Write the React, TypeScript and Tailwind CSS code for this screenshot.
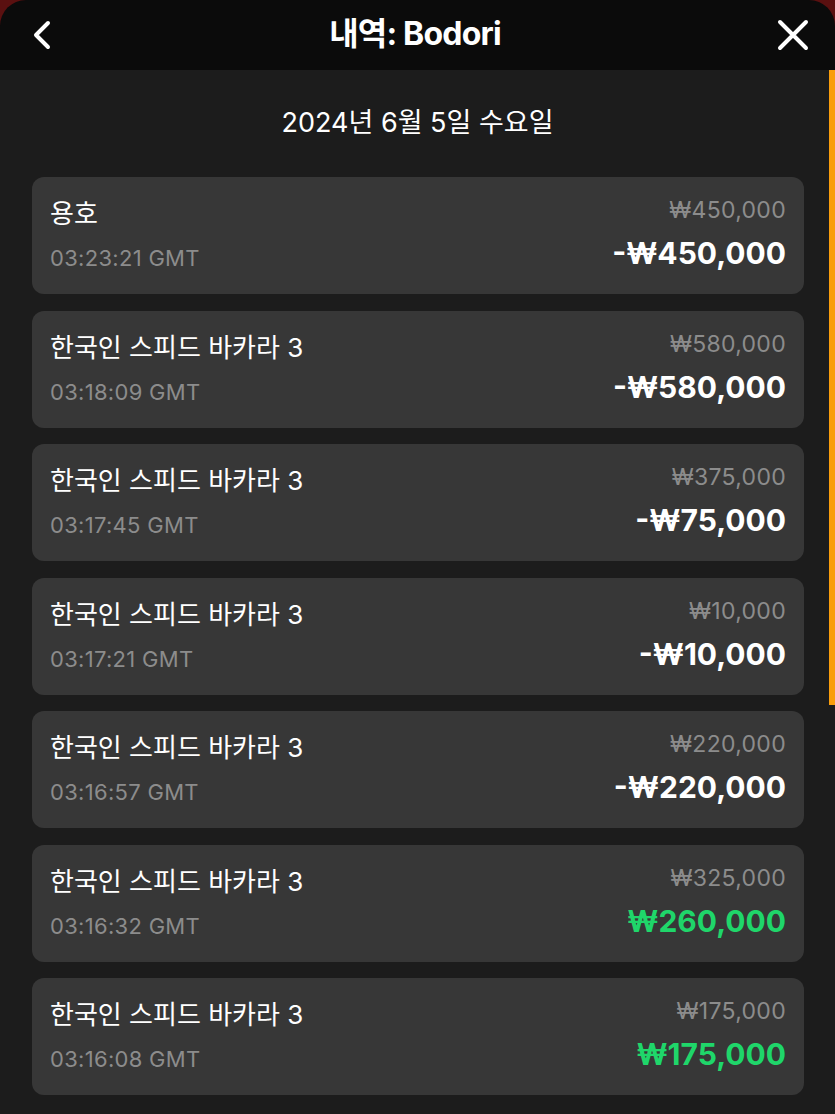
type Row = { name: string; time: string; bet: string; result: string; win?: boolean };

const rows: Row[] = [
  { name: "용호", time: "03:23:21 GMT", bet: "₩450,000", result: "-₩450,000" },
  { name: "한국인 스피드 바카라 3", time: "03:18:09 GMT", bet: "₩580,000", result: "-₩580,000" },
  { name: "한국인 스피드 바카라 3", time: "03:17:45 GMT", bet: "₩375,000", result: "-₩75,000" },
  { name: "한국인 스피드 바카라 3", time: "03:17:21 GMT", bet: "₩10,000", result: "-₩10,000" },
  { name: "한국인 스피드 바카라 3", time: "03:16:57 GMT", bet: "₩220,000", result: "-₩220,000" },
  { name: "한국인 스피드 바카라 3", time: "03:16:32 GMT", bet: "₩325,000", result: "₩260,000", win: true },
  { name: "한국인 스피드 바카라 3", time: "03:16:08 GMT", bet: "₩175,000", result: "₩175,000", win: true },
];

export default function App() {
  return (
    <div
      className="w-[835px] h-[1114px] overflow-hidden bg-[#5a1010] flex flex-col"
      style={{ fontFamily: "Inter, 'Noto Sans CJK KR', sans-serif" }}
    >
      {/* Header */}
      <header className="h-[70px] shrink-0 bg-[#0b0b0b] rounded-t-[26px] flex items-center justify-between pl-[31px] pr-[26px] text-white">
        <svg width="22" height="30" viewBox="0 0 22 30" fill="none" stroke="currentColor" strokeWidth="4" strokeLinecap="round" strokeLinejoin="round">
          <path d="M17 3 L5 15 L17 27" />
        </svg>
        <h1 className="text-[32px] font-bold tracking-tight -mt-[2px]">내역: Bodori</h1>
        <svg width="32" height="32" viewBox="0 0 32 32" fill="none" stroke="currentColor" strokeWidth="4" strokeLinecap="round">
          <path d="M3 3 L29 29 M29 3 L3 29" />
        </svg>
      </header>

      {/* Body */}
      <main className="relative flex-1 bg-[#1c1c1c]">
        <div className="absolute right-0 top-0 w-[6px] h-[635px] bg-[#f99d0c]" />

        <p className="pt-[37px] text-center text-white text-[27px] leading-[32px]">2024년 6월 5일 수요일</p>

        <ul className="mt-[38px] mx-[32px] mr-[31px] flex flex-col gap-[16.5px]">
          {rows.map((r, i) => (
            <li key={i} className="h-[117px] rounded-[12px] bg-[#373737] px-[18px] flex justify-between">
              <div className="flex flex-col pt-[21px]">
                <span className="text-white text-[26px] leading-[32px]">{r.name}</span>
                <span className="mt-[13px] text-[#8c8c8c] text-[22px] leading-[30px] tracking-[0.3px]">{r.time}</span>
              </div>
              <div className="flex flex-col items-end pt-[19px]">
                <span className="text-[#8c8c8c] text-[23px] leading-[28px] tracking-[0.3px]">{r.bet}</span>
                <span
                  className={
                    "mt-[10px] text-[30px] leading-[38px] font-bold " +
                    (r.win ? "text-[#1fd66a]" : "text-white")
                  }
                >
                  {r.result}
                </span>
              </div>
            </li>
          ))}
        </ul>
      </main>
    </div>
  );
}
